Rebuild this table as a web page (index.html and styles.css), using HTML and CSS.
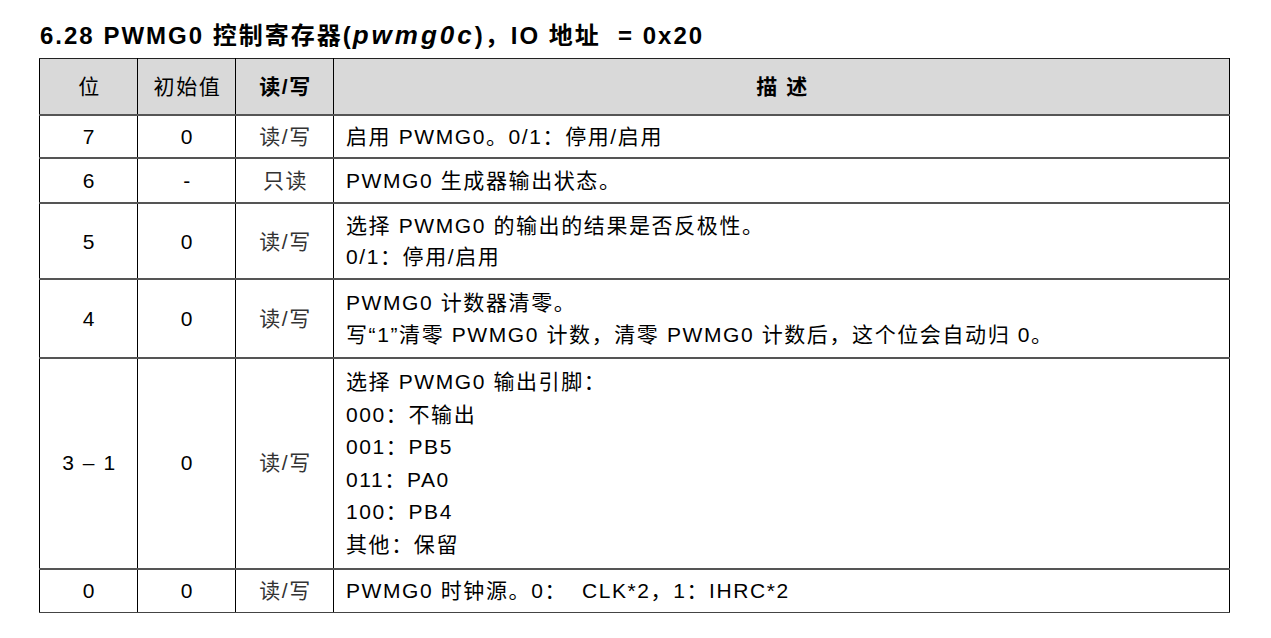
FILE: index.html
```html
<!DOCTYPE html>
<html lang="zh">
<head>
<meta charset="utf-8">
<link rel="stylesheet" href="styles.css">
</head>
<body>
<h2 class="title">6.28 PWMG0 控制寄存器(<i>pwmg0c</i>)，IO 地址&nbsp; = 0x20</h2>
<table class="reg">
  <colgroup>
    <col class="c1"><col class="c2"><col class="c3"><col>
  </colgroup>
  <thead>
    <tr class="head">
      <th class="light">位</th>
      <th class="light">初始值</th>
      <th>读/写</th>
      <th>描&nbsp;述</th>
    </tr>
  </thead>
  <tbody>
    <tr class="r1">
      <td>7</td><td>0</td><td class="rw">读/写</td>
      <td class="desc">启用 PWMG0。0/1：停用/启用</td>
    </tr>
    <tr class="r2">
      <td>6</td><td>-</td><td class="rw">只读</td>
      <td class="desc">PWMG0 生成器输出状态。</td>
    </tr>
    <tr class="r3">
      <td>5</td><td>0</td><td class="rw">读/写</td>
      <td class="desc">选择 PWMG0 的输出的结果是否反极性。<br>0/1：停用/启用</td>
    </tr>
    <tr class="r4">
      <td>4</td><td>0</td><td class="rw">读/写</td>
      <td class="desc">PWMG0 计数器清零。<br>写“1”清零 PWMG0 计数，清零 PWMG0 计数后，这个位会自动归 0。</td>
    </tr>
    <tr class="r5">
      <td>3 – 1</td><td>0</td><td class="rw">读/写</td>
      <td class="desc">选择 PWMG0 输出引脚：<br>000：不输出<br>001：PB5<br>011：PA0<br>100：PB4<br>其他：保留</td>
    </tr>
    <tr class="r6">
      <td>0</td><td>0</td><td class="rw">读/写</td>
      <td class="desc">PWMG0 时钟源。0：&nbsp; CLK*2，1：IHRC*2</td>
    </tr>
  </tbody>
</table>
</body>
</html>
```

FILE: styles.css
```css
html, body {
  margin: 0;
  padding: 0;
  background: #fff;
}
body {
  font-family: "Liberation Sans", Arial, "Noto Sans CJK SC", sans-serif;
  color: #000;
}
.title {
  margin: 0 0 7px 0;
  padding: 21px 0 0 40px;
  height: 30px;
  font-size: 24px;
  letter-spacing: 2px;
  line-height: 30px;
  font-weight: bold;
  white-space: nowrap;
}
.title i {
  font-style: italic;
  font-size: 26px;
  line-height: 1;
  letter-spacing: 3px;
}
.reg {
  margin-left: 39px;
  width: 1191px;
  border-collapse: collapse;
  table-layout: fixed;
  font-size: 21px;
  letter-spacing: 1.6px;
}
.c1, .c2, .c3 {
  width: 98px;
}
.reg th, .reg td {
  border-left: 1px solid #000;
  border-right: 1px solid #000;
  border-top: 2px solid #555;
  border-bottom: 2px solid #555;
  text-align: center;
  vertical-align: middle;
  padding: 0 0 0 2px;
  line-height: 32px;
}
.head th {
  background: #d9d9d9;
  height: 55px;
  font-weight: bold;
  border-top: 1px solid #222;
}
.head th.light {
  font-weight: normal;
}
.rw {
  color: #333;
}
.reg td.desc {
  text-align: left;
  padding: 0 12px;
  white-space: nowrap;
}
.r1 td { height: 41px; }
.r2 td { height: 43px; }
.r3 td { height: 74px; line-height: 31px; }
.r4 td { height: 77px; }
.r5 td { height: 209px; line-height: 32.5px; }
.r6 td { height: 42px; border-bottom: 1px solid #444; }
```
